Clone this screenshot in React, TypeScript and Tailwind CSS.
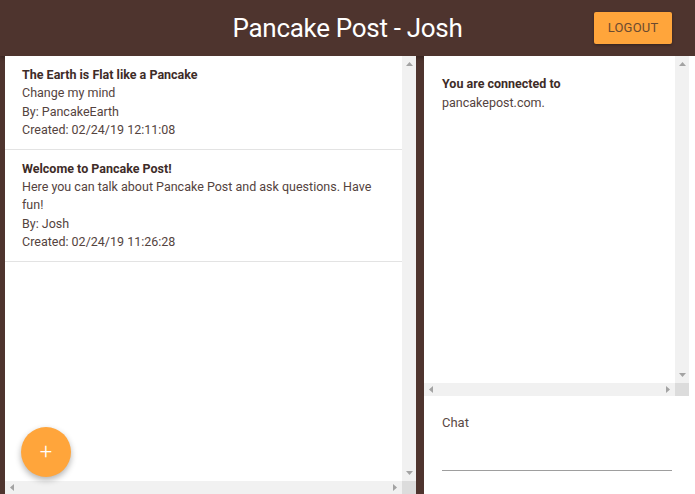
import React from "react";

type Post = { title: string; body: string; by: string; created: string };

const posts: Post[] = [
  {
    title: "The Earth is Flat like a Pancake",
    body: "Change my mind",
    by: "PancakeEarth",
    created: "02/24/19 12:11:08",
  },
  {
    title: "Welcome to Pancake Post!",
    body: "Here you can talk about Pancake Post and ask questions. Have fun!",
    by: "Josh",
    created: "02/24/19 11:26:28",
  },
];

function Arrow({ dir }: { dir: "up" | "down" | "left" | "right" }) {
  const pts = {
    up: "0,4 3.5,0 7,4",
    down: "0,0 3.5,4 7,0",
    left: "4,0 0,3.5 4,7",
    right: "0,0 4,3.5 0,7",
  }[dir];
  const vert = dir === "up" || dir === "down";
  return (
    <svg width={vert ? 7 : 4} height={vert ? 4 : 7} className="fill-[#a3a3a3]">
      <polygon points={pts} />
    </svg>
  );
}

function VScroll() {
  return (
    <div className="w-[14px] shrink-0 bg-[#f1f1f1] flex flex-col items-center justify-between py-[6px]">
      <Arrow dir="up" />
      <Arrow dir="down" />
    </div>
  );
}

function HScroll() {
  return (
    <div className="flex h-[13px] shrink-0">
      <div className="flex-1 bg-[#f1f1f1] flex items-center justify-between px-[5px]">
        <Arrow dir="left" />
        <Arrow dir="right" />
      </div>
      <div className="w-[14px] bg-[#dcdcdc]" />
    </div>
  );
}

export default function App() {
  return (
    <div className="w-[695px] h-[494px] bg-[#4e342e] flex flex-col font-['Roboto',sans-serif] overflow-hidden">
      {/* Header */}
      <header className="h-14 shrink-0 grid grid-cols-[1fr_auto_1fr] items-center shadow-[0_2px_4px_rgba(0,0,0,0.3)]">
        <div />
        <h1 className="text-[26px] font-normal text-white leading-none tracking-[-0.3px]">
          Pancake Post - Josh
        </h1>
        <div className="flex justify-end pr-[23px]">
          <button className="h-8 w-[78px] rounded-[2px] bg-[#ffa53b] text-[13px] font-normal text-[#6b4a30] tracking-[0.2px] shadow-[0_1px_3px_rgba(0,0,0,0.35)]">
            LOGOUT
          </button>
        </div>
      </header>

      <main className="flex-1 min-h-0 flex gap-2 pl-[5px]">
        {/* Posts */}
        <section className="relative w-[411px] bg-white flex flex-col">
          <div className="flex-1 min-h-0 flex">
            <div className="flex-1">
              {posts.map((p) => (
                <div
                  key={p.title}
                  className="border-b border-[#e3e3e3] pl-[17px] pr-4 pt-[10px] pb-[9px] text-[12.5px] leading-[18.4px] text-[#54433e]"
                >
                  <p className="font-bold text-[#3e2c28]">{p.title}</p>
                  <p>{p.body}</p>
                  <p>By: {p.by}</p>
                  <p>Created: {p.created}</p>
                </div>
              ))}
            </div>
            <VScroll />
          </div>
          <HScroll />

          <button className="absolute left-[16px] bottom-[17px] w-[50px] h-[50px] rounded-full bg-[#ffa53b] text-white text-[22px] font-light leading-none flex items-center justify-center shadow-[0_3px_6px_rgba(0,0,0,0.3)]">
            +
          </button>
        </section>

        {/* Chat */}
        <section className="flex-1 bg-white flex flex-col">
          <div className="h-[327px] flex shrink-0">
            <div className="flex-1 pl-[18px] pt-[19px] text-[12.5px] leading-[18.5px] text-[#54433e]">
              <p className="font-bold text-[#3e2c28]">You are connected to</p>
              <p>pancakepost.com.</p>
            </div>
            <VScroll />
            <div className="w-[6px]" />
          </div>
          <div className="flex pr-[6px]">
            <div className="flex-1">
              <HScroll />
            </div>
          </div>
          <div className="flex-1 pl-[18px] pr-[23px] pt-[17px]">
            <p className="text-[13px] text-[#5a4a45]">Chat</p>
            <div className="mt-[30px] border-b border-[#9e9e9e] h-[8px]" />
          </div>
        </section>
      </main>
    </div>
  );
}
